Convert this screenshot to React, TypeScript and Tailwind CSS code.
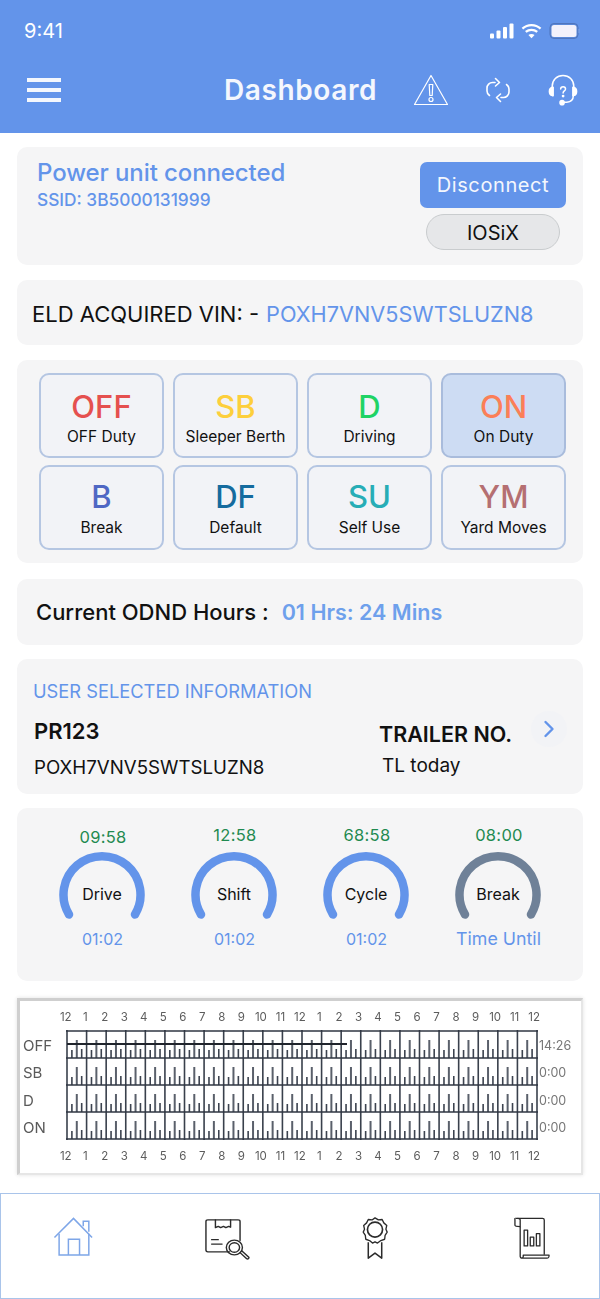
import React from "react";

const font = { fontFamily: "Inter, 'Noto Sans', sans-serif" };

const hours = ["12","1","2","3","4","5","6","7","8","9","10","11","12","1","2","3","4","5","6","7","8","9","10","11","12"];

const statuses = [
  { code: "OFF", label: "OFF Duty", color: "text-[#e5504f]" },
  { code: "SB", label: "Sleeper Berth", color: "text-[#fdcf3c]" },
  { code: "D", label: "Driving", color: "text-[#1fd365]" },
  { code: "ON", label: "On Duty", color: "text-[#fb7f57]", active: true },
  { code: "B", label: "Break", color: "text-[#4f67c4]" },
  { code: "DF", label: "Default", color: "text-[#156b9e]" },
  { code: "SU", label: "Self Use", color: "text-[#27adb6]" },
  { code: "YM", label: "Yard Moves", color: "text-[#b56f72]" },
];

const gauges = [
  { top: "09:58", name: "Drive", bottom: "01:02", size: "text-[16px]", stroke: "#6394ea", lift: false },
  { top: "12:58", name: "Shift", bottom: "01:02", size: "text-[16px]", stroke: "#6394ea", lift: true },
  { top: "68:58", name: "Cycle", bottom: "01:02", size: "text-[16px]", stroke: "#6394ea", lift: true },
  { top: "08:00", name: "Break", bottom: "Time Until", size: "text-[17.8px]", stroke: "#6f8198", lift: true },
];

function Gauge({ g }: { g: (typeof gauges)[number] }) {
  return (
    <div className="flex w-[110px] flex-col items-center">
      <div className={`pl-[2px] text-[16.5px] leading-[20px] tracking-[0.3px] text-[#1f8a50] ${g.lift ? "mt-[-2px] mb-[2px]" : ""}`}>{g.top}</div>
      <div className="relative mt-[4px] h-[74px] w-[88px]">
        <svg width="88" height="74" viewBox="0 0 88 74" fill="none">
          <path d="M11 63.500 A38.5 38.5 0 1 1 77 63.500" stroke={g.stroke} strokeWidth="8.5" strokeLinecap="round" />
        </svg>
        <div className="absolute inset-x-0 top-[32px] text-center text-[16px] leading-[22px] text-[#111]">{g.name}</div>
      </div>
      <div className={`mt-[4px] pl-[1px] leading-[20px] text-[#6394ea] ${g.size}`}>{g.bottom}</div>
    </div>
  );
}

function HourRow() {
  return (
    <div className="ml-[36px] flex w-[488px] justify-between text-[11.5px] leading-[14px] text-[#5c5c5c]">
      {hours.map((h, i) => (
        <span key={i} className="w-[20px] text-center">{h}</span>
      ))}
    </div>
  );
}

function Grid() {
  const W = 470, H = 108;
  const col = W / 24, row = H / 4;
  const lines: React.ReactNode[] = [];
  for (let r = 0; r < 4; r++) {
    const bottom = (r + 1) * row;
    for (let c = 0; c < 24; c++) {
      const x = c * col;
      [[0.25, 8, 1.6, "#3c434f"], [0.5, 18, 2, "#5a606b"], [0.75, 9, 1.6, "#3c434f"]].forEach(([f, h, w, s], k) => {
        const fx = x + col * (f as number);
        lines.push(<line key={`${r}-${c}-${k}`} x1={fx} x2={fx} y1={bottom} y2={bottom - (h as number)} stroke={s as string} strokeWidth={w as number} />);
      });
    }
  }
  const grid: React.ReactNode[] = [];
  for (let c = 0; c <= 24; c++) grid.push(<line key={`v${c}`} x1={c * col + 1} x2={c * col + 1} y1="0" y2={H + 2} stroke="#39404c" strokeWidth="1.6" />);
  for (let r = 0; r <= 4; r++) grid.push(<line key={`h${r}`} x1="0" x2={W + 2} y1={r * row + 1} y2={r * row + 1} stroke="#2f3642" strokeWidth="1.6" />);
  return (
    <svg width="472" height="110" viewBox="0 0 472 110" fill="none" className="shrink-0">
      <g transform="translate(1 1)">{lines}</g>
      {grid}
      <line x1="1" x2="281" y1="14" y2="14" stroke="#20242c" strokeWidth="2" />
    </svg>
  );
}

export default function App() {
  return (
    <div className="flex h-[1299px] w-[600px] flex-col overflow-hidden bg-white" style={font}>
      <header className="h-[133px] shrink-0 bg-[#6394ea] text-white">
        <div className="flex items-center justify-between pl-[24px] pr-[20px] pt-[19px]">
          <span className="text-[20px] leading-[24px]">9:41</span>
          <div className="flex items-center gap-[7px]">
            <svg width="24" height="16" viewBox="0 0 24 16" fill="white">
              <rect x="0" y="10.5" width="4" height="5" rx="1" />
              <rect x="6.5" y="7.5" width="4" height="8" rx="1" />
              <rect x="13" y="4" width="4" height="11.5" rx="1" />
              <rect x="19.5" y="0.5" width="4" height="15" rx="1" />
            </svg>
            <svg width="21" height="16" viewBox="0 0 22 16" fill="none" stroke="white" strokeWidth="2.4">
              <path d="M1.5 5.5C7 0.5 15 0.5 20.5 5.5" />
              <path d="M5 9C8.5 6 13.5 6 17 9" />
              <path d="M11 15.5L7.8 12.3C9.6 10.8 12.4 10.8 14.2 12.3Z" fill="white" stroke="none" />
            </svg>
            <svg width="31" height="16" viewBox="0 0 31 16" fill="none">
              <rect x="1" y="0.5" width="28" height="15" rx="4" stroke="#4f75bd" strokeWidth="1" fill="#4f75bd" fillOpacity="0.4" />
              <rect x="2.5" y="2" width="25" height="12" rx="2.5" fill="#f3f1fb" />
              <rect x="29.5" y="6" width="1" height="4" fill="#7ea2e4" />
            </svg>
          </div>
        </div>
        <div className="mt-[29px] flex items-center pl-[27px]">
          <div className="flex w-[34px] flex-col gap-[6px]">
            <span className="h-[4px] bg-[#f4f7fd]" />
            <span className="h-[4px] bg-[#f4f7fd]" />
            <span className="h-[4px] bg-[#f4f7fd]" />
          </div>
          <h1 className="ml-[163px] w-[155px] text-[28px] font-semibold leading-[36px] tracking-[0.6px] text-[#f4f7fd]">Dashboard</h1>
          <svg className="ml-[34px]" width="36" height="34" viewBox="0 0 36 34" fill="none" stroke="white" strokeWidth="1.2" strokeLinejoin="round">
            <path d="M18 2.5L34.5 31.5H1.5Z" />
            <path d="M16.2 11.5h3.6l-.6 11h-2.400z" />
            <circle cx="18" cy="26.5" r="2" />
          </svg>
          <svg className="ml-[36px]" width="26" height="26" viewBox="0 0 26 26" fill="none" stroke="white" strokeWidth="1.6" strokeLinecap="round" strokeLinejoin="round">
            <path d="M10 5.5H7.5C4.5 5.5 2 8 2 11v3c0 2 1 3.5 2.5 4.5" />
            <path d="M10.5 1.5L14.5 5.5L10.5 9" />
            <path d="M16 20.5h2.5c3 0 5.5-2.5 5.5-5.500v-3c0-2-1-3.500-2.500-4.500" />
            <path d="M15.5 17L11.5 20.5L15.5 24.500" />
          </svg>
          <svg className="ml-[37px]" width="30" height="34" viewBox="0 0 32 34" fill="none" stroke="white" strokeWidth="1.6" strokeLinecap="round" strokeLinejoin="round">
            <path d="M4.500 15V13C4.500 6.500 9.500 1.500 16 1.500S27.500 6.500 27.500 13v2" />
            <path d="M4.500 14C2.500 14.500 1.500 16 1.500 18.500s1 4 3 4.500h1v-9z" fill="white" />
            <path d="M27.500 14c2 .5 3 2 3 4.500s-1 4-3 4.500h-1v-9z" fill="white" />
            <path d="M27 23c0 4-2.500 6.500-7 7h-3" />
            <circle cx="15" cy="30.500" r="2.200" fill="white" />
            <path d="M13.500 16c0-1.500 1.100-2.500 2.600-2.500s2.600 1 2.600 2.400c0 2.100-2.600 2.100-2.600 4.300" />
            <circle cx="16.100" cy="23.500" r=".7" fill="white" />
          </svg>
        </div>
      </header>

      <main className="flex flex-1 flex-col px-[17px]">
        <section className="mt-[14px] flex h-[118px] justify-between rounded-[10px] bg-[#f5f5f6] pl-[20px] pr-[17px] pt-[11px]">
          <div>
            <div className="text-[24px] font-medium leading-[30px] tracking-[-0.1px] text-[#6394ea]">Power unit connected</div>
            <div className="mt-[2px] text-[17.3px] font-medium leading-[20px] text-[#6394ea]">SSID: 3B5000131999</div>
          </div>
          <div className="flex w-[146px] flex-col items-center pt-[4px]">
            <div className="flex h-[46px] w-[146px] items-center justify-center rounded-[7px] bg-[#6394ea] text-[20px] leading-[24px] tracking-[0.6px] text-[#f4f7fd]">Disconnect</div>
            <div className="mt-[6px] flex h-[36px] w-[134px] items-center justify-center rounded-full border border-[#c9ccce] bg-[#e6e7e9] pt-[1px] text-[20px] text-[#111]">IOSiX</div>
          </div>
        </section>

        <section className="mt-[15px] flex h-[65px] items-center rounded-[10px] bg-[#f5f5f6] pl-[15px] pt-[3px] text-[22px] text-[#111]">
          <span>ELD ACQUIRED VIN: -</span>
          <span className="ml-[7px] text-[21.7px] text-[#6394ea]">POXH7VNV5SWTSLUZN8</span>
        </section>

        <section className="mt-[15px] grid h-[203px] grid-cols-[125px_125px_125px_125px] content-start gap-x-[9px] gap-y-[7px] rounded-[10px] bg-[#f5f5f6] pl-[22px] pt-[13px]">
          {statuses.map((s, i) => (
            <div key={s.code} className={`flex h-[85px] flex-col items-center rounded-[10px] border-2 ${i < 4 ? "pt-[10px]" : "pt-[8px]"} ${s.active ? "border-[#a9bcdc] bg-[#cddcf3]" : "border-[#b5c6e2] bg-[#f2f3f7]"}`}>
              <span className={`text-[31px] font-medium leading-[44px] ${s.color}`}>{s.code}</span>
              <span className={`text-[15.5px] leading-[20px] text-[#111] ${i < 4 ? "mt-[-2px]" : "mt-[-1px]"}`}>{s.label}</span>
            </div>
          ))}
        </section>

        <section className="mt-[16px] flex h-[66px] items-center rounded-[10px] bg-[#f5f5f6] pl-[19px]">
          <span className="text-[22px] font-medium text-[#111]">Current ODND Hours :</span>
          <span className="ml-[13px] text-[21.5px] font-semibold text-[#6ea0ec]">01 Hrs: 24 Mins</span>
        </section>

        <section className="relative mt-[14px] h-[135px] rounded-[10px] bg-[#f5f5f6] pl-[16px] pt-[20px]">
          <div className="text-[18.3px] leading-[24px] text-[#6394ea]">USER SELECTED INFORMATION</div>
          <div className="mt-[14px] flex">
            <div className="w-[346px]">
              <div className="pl-[1px] text-[22px] font-semibold leading-[28px] text-[#111]">PR123</div>
              <div className="mt-[11px] pl-[1px] text-[18.7px] leading-[24px] text-[#111]">POXH7VNV5SWTSLUZN8</div>
            </div>
            <div>
              <div className="pt-[2px] text-[21.5px] font-semibold leading-[30px] text-[#111]">TRAILER NO.</div>
              <div className="mt-[5px] pl-[3px] text-[19px] leading-[24px] text-[#111]">TL today</div>
            </div>
          </div>
          <div className="absolute left-[514px] top-[52px] flex h-[36px] w-[36px] items-center justify-center rounded-full bg-[#f2f3f6]">
            <svg width="12" height="18" viewBox="0 0 12 18" fill="none" stroke="#6394ea" strokeWidth="2.4" strokeLinecap="round" strokeLinejoin="round">
              <path d="M2.500 2L9.500 9L2.500 16" />
            </svg>
          </div>
        </section>

        <section className="mt-[14px] flex h-[173px] rounded-[10px] bg-[#f5f5f6] pl-[30px] pt-[19px] gap-x-[22px]">
          {gauges.map((g) => (
            <Gauge key={g.name} g={g} />
          ))}
        </section>

        <section className="mt-[17px] h-[177px] border-[2px] border-[#e6e6e6] border-t-[3px] border-l-[3px] border-t-[#cfcfcf] border-l-[#cfcfcf] bg-white pt-[9px] shadow-[0_0_4px_rgba(0,0,0,0.12)]">
          <div className="blur-[0.4px]">
            <HourRow />
            <div className="mt-[6px] flex">
              <div className="flex h-[110px] w-[46px] shrink-0 translate-y-[2px] flex-col justify-around pl-[3px] text-[15px] leading-[18px] text-[#5a5a5a]">
                <span>OFF</span>
                <span>SB</span>
                <span>D</span>
                <span>ON</span>
              </div>
              <Grid />
              <div className="flex h-[110px] translate-y-[2px] flex-col justify-around pl-[1px] text-[12.5px] leading-[16px] text-[#777]">
                <span>14:26</span>
                <span>0:00</span>
                <span>0:00</span>
                <span>0:00</span>
              </div>
            </div>
            <div className="mt-[9px]">
              <HourRow />
            </div>
          </div>
        </section>

        <div className="flex-1" />
      </main>

      <nav className="flex h-[106px] shrink-0 border border-[#a9c4ea] pl-[51px] pt-[22px]">
        <svg width="43" height="39" viewBox="0 0 43 42" fill="none" stroke="#7ea6e8" strokeWidth="1.6" className="mt-[1px]">
          <path d="M1 22L21.500 1.500L41.500 22" />
          <path d="M6 18V41H38V18" />
          <path d="M16 41V24H28V41" />
          <path d="M32 10V4.500H38V16" />
        </svg>
        <svg width="45" height="41" viewBox="0 0 47.500 47.500" preserveAspectRatio="none" fill="none" stroke="#2b2b2b" strokeWidth="1.500" strokeLinecap="round" strokeLinejoin="round" className="ml-[110px] mt-[3px]">
          <path d="M26 38H3a2 2 0 0 1-2-2V3a2 2 0 0 1 2-2h32a2 2 0 0 1 2 2v22" />
          <path d="M11 1v9l3-1.500 2.500 1.500 3-1.500 2.500 1.500 3-1.500 2 1V1" />
          <path d="M7 24h7M7 29h11" />
          <circle cx="31" cy="33" r="8.500" />
          <circle cx="31" cy="33" r="5.500" />
          <path d="M37 39l7 7c1.500 1 3-1 2-2l-7-7" />
        </svg>
        <svg width="28" height="42" viewBox="0 0 32 50" fill="none" stroke="#2b2b2b" strokeWidth="1.600" strokeLinejoin="round" className="ml-[111px] mt-[1px]">
          <path d="M16 1l4 2.500 4.500-.5 2 4 3.500 3-1 4.500 1.500 3.500-2.500 4-.5 4.500-4.500 1.500L19 31l-3-1.500-3 1.500-3.500-3-4.500-1.500-.5-4.500-2.500-4 1.500-3.500-1-4.500 3.500-3 2-4 4.500.5z" />
          <circle cx="16" cy="15" r="9" strokeWidth="2" />
          <path d="M8 30V49L16 43L24 49V30" strokeWidth="1.800" />
        </svg>
        <svg width="38" height="42" viewBox="0 0 40 48" fill="none" stroke="#2b2b2b" strokeWidth="1.500" strokeLinejoin="round" className="ml-[124px] mt-[1px]">
          <path d="M1 1.500H32a2 2 0 0 1 2 2V43" />
          <path d="M1 1.500c-1 0-.5 1-.5 2v6c0 1 1 1.500 6 1.500V3.500c0-1-1-2-3-2" />
          <path d="M6.500 11V45a2 2 0 0 0 2 2" />
          <path d="M9 47h28c2 0 2.500-.5 2.500-3.500H10v1.500a2 2 0 0 1-2 2" />
          <rect x="11" y="15" width="4" height="18" />
          <rect x="18" y="23" width="4" height="10" />
          <rect x="25" y="19" width="4" height="14" />
        </svg>
      </nav>
    </div>
  );
}
